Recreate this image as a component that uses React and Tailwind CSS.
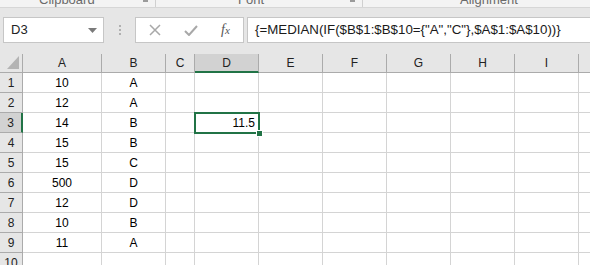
const cols = [
  { key: 'A', w: 'w-[79px]' },
  { key: 'B', w: 'w-[64px]' },
  { key: 'C', w: 'w-[29px]' },
  { key: 'D', w: 'w-[64px]' },
  { key: 'E', w: 'w-[64px]' },
  { key: 'F', w: 'w-[64px]' },
  { key: 'G', w: 'w-[64px]' },
  { key: 'H', w: 'w-[64px]' },
  { key: 'I', w: 'w-[64px]' },
]

const data = [
  ['10', 'A'],
  ['12', 'A'],
  ['14', 'B'],
  ['15', 'B'],
  ['15', 'C'],
  ['500', 'D'],
  ['12', 'D'],
  ['10', 'B'],
  ['11', 'A'],
  ['', ''],
]

function RibbonStrip() {
  return (
    <div className="relative h-[8px] overflow-hidden bg-[#f3f3f3] border-b border-[#d6d6d6] text-[13px] text-[#6a6a6a]">
      <span className="absolute left-[39px] top-[-10px]">Clipboard</span>
      <span className="absolute left-[143px] top-[-2px] w-[5px] h-[4px] bg-[#9a9a9a]" />
      <span className="absolute left-[155px] top-0 h-[8px] border-l border-[#d0d0d0]" />
      <span className="absolute left-[238px] top-[-10px]">Font</span>
      <span className="absolute left-[350px] top-[-2px] w-[5px] h-[4px] bg-[#9a9a9a]" />
      <span className="absolute left-[362px] top-0 h-[8px] border-l border-[#d0d0d0]" />
      <span className="absolute left-[460px] top-[-10px]">Alignment</span>
    </div>
  )
}

function FormulaBar() {
  return (
    <div className="flex items-start h-[46px] bg-[#e6e6e6] pt-[9px]">
      {/* Name box */}
      <div className="ml-[3px] w-[101px] h-[26px] bg-white border border-[#c6c6c6] flex items-center justify-between pl-[7px] pr-[6px]">
        <span className="text-[13px] text-[#222]">D3</span>
        <svg width="9" height="5" viewBox="0 0 9 5">
          <path d="M0 0h9L4.5 5z" fill="#7a7a7a" />
        </svg>
      </div>
      <div className="w-[31px] h-[26px] flex flex-col items-center justify-center gap-[2px]">
        <span className="w-[2px] h-[2px] bg-[#b0b0b0]" />
        <span className="w-[2px] h-[2px] bg-[#b0b0b0]" />
        <span className="w-[2px] h-[2px] bg-[#b0b0b0]" />
      </div>
      {/* Buttons */}
      <div className="w-[109px] h-[26px] bg-white border border-[#c6c6c6] flex items-center">
        <svg className="ml-[13px]" width="12" height="12" viewBox="0 0 12 12">
          <path d="M1 1l10 10M11 1L1 11" stroke="#a8a8a8" strokeWidth="1.5" />
        </svg>
        <svg className="ml-[23px]" width="14" height="11" viewBox="0 0 14 11">
          <path d="M1 6l4 4L13 1" stroke="#a8a8a8" strokeWidth="2" fill="none" />
        </svg>
        <span className="ml-[23px] font-['Liberation_Serif',serif] italic text-[14px] text-[#555] leading-none">
          f<span className="text-[11px]">x</span>
        </span>
      </div>
      {/* Formula input */}
      <div className="ml-[3px] flex-1 h-[26px] bg-white border-y border-l border-[#c6c6c6] flex items-center pl-[7px]">
        <span className="text-[13.3px] text-[#1a1a1a] whitespace-nowrap">
          {'{=MEDIAN(IF($B$1:$B$10={"A","C"},$A$1:$A$10))}'}
        </span>
      </div>
    </div>
  )
}

function HeaderRow() {
  return (
    <div className="flex h-[19px] bg-[#e6e6e6]">
      <div className="w-[23px] shrink-0 relative border-r border-b border-[#ababab]">
        <svg className="absolute left-[7px] top-[2px]" width="12" height="13" viewBox="0 0 12 13">
          <path d="M12 0v13H0z" fill="#b4b4b4" />
        </svg>
      </div>
      {cols.map((c) => (
        <div
          key={c.key}
          className={`${c.w} shrink-0 flex items-center justify-center border-r border-[#ababab] text-[12px] text-[#222] ${
            c.key === 'D' ? 'bg-[#d2d2d2] border-b-2 border-b-[#217346]' : 'border-b border-b-[#ababab]'
          }`}
        >
          {c.key}
        </div>
      ))}
      <div className="flex-1 border-b border-[#ababab]" />
    </div>
  )
}

function Row({ n, vals }) {
  const active = n === 3
  return (
    <div className="flex h-[20px]">
      <div
        className={`w-[23px] shrink-0 flex items-center justify-center text-[12px] text-[#222] border-b border-[#ababab] ${
          active ? 'bg-[#d2d2d2] border-r-2 border-r-[#217346]' : 'bg-[#e6e6e6] border-r border-r-[#ababab]'
        }`}
      >
        {n}
      </div>
      {cols.map((c, i) => (
        <div
          key={c.key}
          className={`${c.w} shrink-0 flex items-center border-r border-b border-[#d4d4d4] text-[12px] text-black ${
            c.key === 'D' ? 'justify-end pr-[3px]' : 'justify-center'
          }`}
        >
          {i === 0 ? vals[0] : i === 1 ? vals[1] : c.key === 'D' && active ? '11.5' : ''}
        </div>
      ))}
      <div className="flex-1 border-b border-[#d4d4d4]" />
    </div>
  )
}

export default function App() {
  return (
    <div className="w-[590px] h-[265px] overflow-hidden bg-white font-['Liberation_Sans',sans-serif]">
      <RibbonStrip />
      <FormulaBar />
      <div className="relative">
        <HeaderRow />
        {data.map((vals, i) => (
          <Row key={i} n={i + 1} vals={vals} />
        ))}
        {/* active cell */}
        <div className="absolute left-[194px] top-[58px] w-[66px] h-[22px] border-2 border-[#217346] pointer-events-none" />
        <div className="absolute left-[256px] top-[76px] w-[7px] h-[7px] bg-[#217346] border border-white" />
      </div>
    </div>
  )
}
